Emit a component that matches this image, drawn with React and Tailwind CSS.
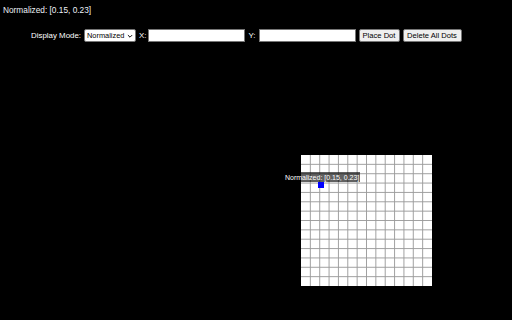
import React from "react";

// Dot placement page: a status line, the mode/coordinate controls,
// and a small gridded canvas with one dot and its hover label.
const dots = [{ x: 0.15, y: 0.23 }];
const SIZE = 131;
const CELLS = 14;

function Grid() {
  const lines = [];
  for (let i = 1; i < CELLS; i++) {
    lines.push(<line key={"v" + i} x1={i * 10} y1="0" x2={i * 10} y2="140" />);
    lines.push(<line key={"h" + i} x1="0" y1={i * 10} x2="140" y2={i * 10} />);
  }
  return (
    <svg viewBox="0 0 140 140" className="absolute inset-0 w-full h-full" stroke="#9a9a9a" strokeWidth="1">
      {lines}
    </svg>
  );
}

export default function App() {
  const label = `Normalized: [${dots[0].x.toFixed(2)}, ${dots[0].y.toFixed(2)}]`;

  return (
    <div className="w-[512px] h-[320px] overflow-hidden bg-black text-white font-['Liberation_Sans',Arial,sans-serif]">
      <div className="pt-[4px] pl-[3px] text-[8.3px] leading-[12px] text-[#eef2f8]">{label}</div>

      <div className="flex items-center ml-[31px] mt-[13px] h-[13px] text-[7.9px] leading-none">
        <span className="mr-[3px]">Display Mode:</span>
        <div className="flex items-center h-[13px] w-[52px] bg-white text-black border border-[#767676] rounded-[2px] pl-[2px] text-[7.4px]">
          <span className="flex-1">Normalized</span>
          <svg viewBox="0 0 10 10" className="w-[6px] h-[6px] mr-[2px]" fill="none" stroke="#000" strokeWidth="1.6">
            <path d="M1.5 3.5 L5 7 L8.5 3.5" />
          </svg>
        </div>
        <span className="ml-[3px] mr-[2px]">X:</span>
        <div className="h-[13px] w-[97px] bg-white border border-[#767676]" />
        <span className="ml-[3px] mr-[3px]">Y:</span>
        <div className="h-[13px] w-[97px] bg-white border border-[#767676]" />
        <button className="ml-[3px] h-[13px] w-[41px] bg-[#efefef] text-black border border-[#767676] rounded-[2px] leading-none text-[7.6px]">
          Place Dot
        </button>
        <button className="ml-[3px] h-[13px] w-[59px] bg-[#efefef] text-black border border-[#767676] rounded-[2px] leading-none text-[7.6px]">
          Delete All Dots
        </button>
      </div>

      <div className="relative ml-[301px] mt-[113px] w-[131px] h-[131px] bg-white">
        <Grid />
        {dots.map((d, i) => (
          <div
            key={i}
            className="absolute w-[6px] h-[6px] bg-[#0000ff]"
            style={{ left: d.x * SIZE - 3, top: d.y * SIZE - 3 }}
          />
        ))}
        <div className="absolute left-[-17px] top-[17px] h-[10px] px-[1px] flex items-center bg-[rgba(0,0,0,0.62)] text-white text-[7px] leading-none whitespace-nowrap">
          {label}
        </div>
      </div>
    </div>
  );
}
